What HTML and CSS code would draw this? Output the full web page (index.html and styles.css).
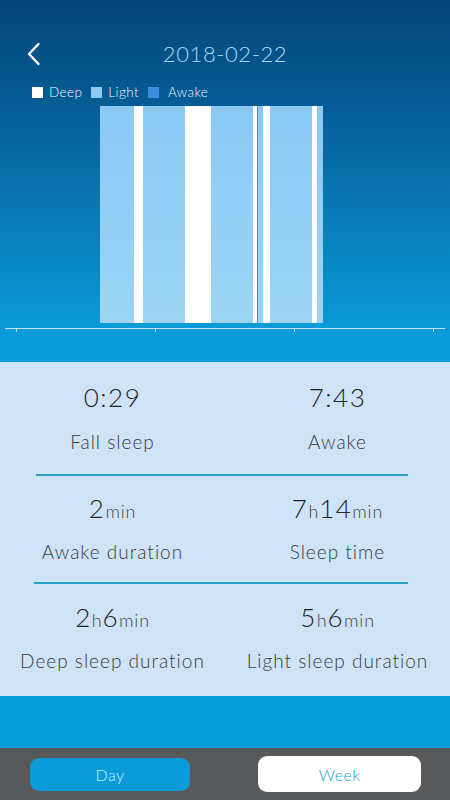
FILE: index.html
```html
<!DOCTYPE html>
<html lang="en">
<head>
  <meta charset="UTF-8">
  <title>Sleep - 2018-02-22</title>
  <link rel="stylesheet" href="styles.css">
</head>
<body>
  <div class="screen">
    <header class="top">
      <div class="titlebar">
        <svg class="back" width="16" height="24" viewBox="0 0 16 24">
          <path d="M12.5 2 L3 12 L12.5 22" fill="none" stroke="#fff" stroke-width="2.4" stroke-linecap="round" stroke-linejoin="round"/>
        </svg>
        <div class="date">2018-02-22</div>
      </div>

      <div class="legend">
        <span class="key"><i class="sw deep"></i>Deep</span>
        <span class="key"><i class="sw light"></i>Light</span>
        <span class="key awake-key"><i class="sw awake"></i>Awake</span>
      </div>

      <div class="chart">
        <div class="bars">
          <div class="seg light" style="width:34px"></div>
          <div class="seg deep" style="width:9px"></div>
          <div class="seg light" style="width:42px"></div>
          <div class="seg deep" style="width:26px"></div>
          <div class="seg light" style="width:42px"></div>
          <div class="seg deep" style="width:4px"></div>
          <div class="seg awake" style="width:1px"></div>
          <div class="seg light" style="width:5px"></div>
          <div class="seg deep" style="width:7px"></div>
          <div class="seg light" style="width:42px"></div>
          <div class="seg deep" style="width:5px"></div>
          <div class="seg light" style="width:6px"></div>
        </div>
        <div class="axis">
          <span class="tick"></span>
          <span class="tick"></span>
          <span class="tick"></span>
          <span class="tick"></span>
        </div>
      </div>
    </header>

    <section class="stats">
      <div class="row first">
        <div class="cell">
          <div class="num">0:29</div>
          <div class="label">Fall sleep</div>
        </div>
        <div class="cell">
          <div class="num">7:43</div>
          <div class="label">Awake</div>
        </div>
      </div>
      <hr class="divider">
      <div class="row">
        <div class="cell">
          <div class="num">2<small>min</small></div>
          <div class="label">Awake duration</div>
        </div>
        <div class="cell">
          <div class="num">7<small>h</small>14<small>min</small></div>
          <div class="label">Sleep time</div>
        </div>
      </div>
      <hr class="divider second">
      <div class="row last">
        <div class="cell">
          <div class="num">2<small>h</small>6<small>min</small></div>
          <div class="label">Deep sleep duration</div>
        </div>
        <div class="cell">
          <div class="num">5<small>h</small>6<small>min</small></div>
          <div class="label">Light sleep duration</div>
        </div>
      </div>
    </section>

    <div class="strip"></div>

    <nav class="tabs">
      <button class="tab active">Day</button>
      <button class="tab week">Week</button>
    </nav>
  </div>
</body>
</html>
```

FILE: styles.css
```css
* {
  box-sizing: border-box;
}

body {
  margin: 0;
  font-family: 'Lato', 'Open Sans', sans-serif;
  font-weight: 300;
  background: #58595b;
}

.screen {
  width: 450px;
  height: 800px;
  display: flex;
  flex-direction: column;
}

/* header with gradient + chart */
.top {
  height: 362px;
  background: linear-gradient(180deg, #044679 0, #06609a 120px, #0a9bd8 330px, #079bd8 362px);
  padding-top: 38px;
}

.titlebar {
  position: relative;
  height: 30px;
  display: flex;
  justify-content: center;
  align-items: center;
}

.back {
  position: absolute;
  left: 26px;
  top: 4px;
}

.date {
  color: #a9d8f2;
  font-size: 22px;
  letter-spacing: 0.6px;
}

.legend {
  margin-top: 16px;
  padding-left: 32px;
  height: 16px;
  display: flex;
  align-items: center;
  gap: 9px;
  color: #eef7fd;
  font-size: 13.5px;
  letter-spacing: 0.4px;
}

.key {
  display: flex;
  align-items: center;
  gap: 6px;
}

.awake-key {
  gap: 9px;
}

.sw {
  width: 11px;
  height: 11px;
  display: inline-block;
}

.sw.deep { background: #fff; }
.sw.light { background: #8dcbf3; }
.sw.awake { background: #3a8ee0; }

.chart {
  margin-top: 6px;
}

.bars {
  margin-left: 100px;
  width: 223px;
  height: 217px;
  display: flex;
}

.seg {
  height: 100%;
  flex-shrink: 0;
}

.seg.light { background: linear-gradient(180deg, #89c9f3, #9dd4f5); }
.seg.deep { background: #fff; }
.seg.awake { background: #3a8ee0; }

.axis {
  margin: 5px 5px 0;
  height: 1px;
  background: #bfe6f8;
  display: flex;
  justify-content: space-between;
  padding: 0 11px;
}

.tick {
  width: 1px;
  height: 4px;
  background: #bfe6f8;
}

/* stats panel */
.stats {
  height: 334px;
  background: #cfe3f8;
  color: #2b2b2b;
}

.row {
  display: grid;
  grid-template-columns: 1fr 1fr;
  padding: 17px 0 18px;
}

.row.first {
  padding: 20px 0 20px;
}

.row.last {
  padding-top: 18px;
}

.cell {
  text-align: center;
  display: flex;
  flex-direction: column;
  gap: 17px;
}

.row.first .cell {
  gap: 18px;
}

.num {
  font-size: 26px;
  line-height: 30px;
  color: #222;
  letter-spacing: 1.5px;
}

.num small {
  font-size: 18px;
  line-height: 0;
  color: #444;
  letter-spacing: 0.8px;
}

.label {
  font-size: 19px;
  line-height: 24px;
  color: #3a3a3a;
  letter-spacing: 1px;
}

.divider {
  margin: 0 42px 0 36px;
  border: none;
  height: 2px;
  background: #2aa0c9;
}

.divider.second {
  margin-left: 34px;
}

.strip {
  height: 52px;
  background: #079bd8;
}

/* bottom tabs */
.tabs {
  flex: 1;
  background: #58595b;
  display: flex;
  align-items: center;
  padding: 0 29px 0 30px;
  justify-content: space-between;
}

.tab {
  font-family: 'Lato', sans-serif;
  font-weight: 300;
  font-size: 16px;
  letter-spacing: 0.4px;
  border: none;
  border-radius: 9px;
}

.tab.active {
  width: 160px;
  height: 33px;
  background: #0a9bd8;
  color: #c8eefb;
}

.tab.week {
  width: 163px;
  height: 36px;
  background: #fff;
  color: #1a9ad6;
}
```
